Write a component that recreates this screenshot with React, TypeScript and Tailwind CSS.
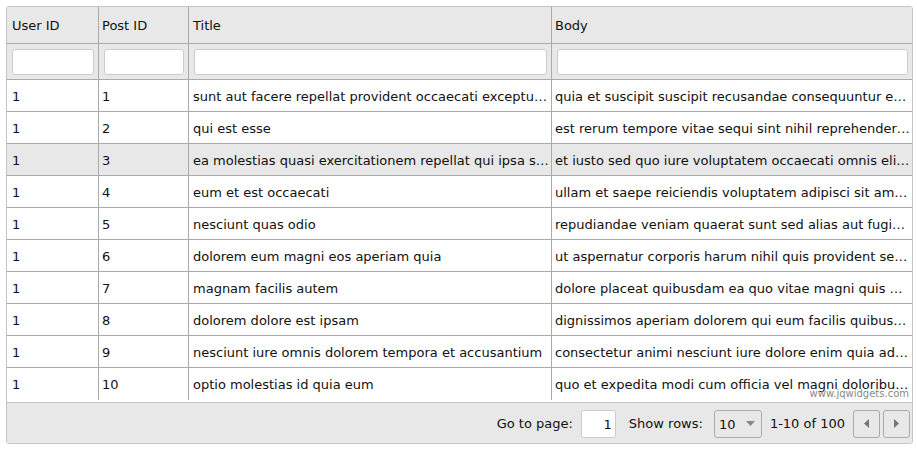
import React from "react";

type Post = {
  userId: number;
  id: number;
  title: string;
  body: string;
};

const posts: Post[] = [
  {
    userId: 1,
    id: 1,
    title: "sunt aut facere repellat provident occaecati excepturi optio reprehenderit",
    body: "quia et suscipit suscipit recusandae consequuntur expedita et cum reprehenderit molestiae ut ut quas totam",
  },
  {
    userId: 1,
    id: 2,
    title: "qui est esse",
    body: "est rerum tempore vitae sequi sint nihil reprehenderit dolor beatae ea dolores neque",
  },
  {
    userId: 1,
    id: 3,
    title: "ea molestias quasi exercitationem repellat qui ipsa sit aut",
    body: "et iusto sed quo iure voluptatem occaecati omnis eligendi aut ad voluptatem doloribus vel accusantium",
  },
  {
    userId: 1,
    id: 4,
    title: "eum et est occaecati",
    body: "ullam et saepe reiciendis voluptatem adipisci sit amet autem assumenda provident rerum culpa",
  },
  {
    userId: 1,
    id: 5,
    title: "nesciunt quas odio",
    body: "repudiandae veniam quaerat sunt sed alias aut fugiat sit autem sed est voluptatem omnis",
  },
  {
    userId: 1,
    id: 6,
    title: "dolorem eum magni eos aperiam quia",
    body: "ut aspernatur corporis harum nihil quis provident sequi mollitia nobis aliquid molestiae",
  },
  {
    userId: 1,
    id: 7,
    title: "magnam facilis autem",
    body: "dolore placeat quibusdam ea quo vitae magni quis enim qui quis quo nemo aut saepe",
  },
  {
    userId: 1,
    id: 8,
    title: "dolorem dolore est ipsam",
    body: "dignissimos aperiam dolorem qui eum facilis quibusdam animi sint suscipit qui sint possimus cum",
  },
  {
    userId: 1,
    id: 9,
    title: "nesciunt iure omnis dolorem tempora et accusantium",
    body: "consectetur animi nesciunt iure dolore enim quia ad veniam autem ut quam aut nobis",
  },
  {
    userId: 1,
    id: 10,
    title: "optio molestias id quia eum",
    body: "quo et expedita modi cum officia vel magni doloribus qui repudiandae vero nisi sit",
  },
];

const cols = "grid grid-cols-[92px_90px_363px_360px]";
const headPad = ["pl-[5px]", "pl-[3px]", "pl-[4px]", "pl-[3px]"];

export default function App() {
  return (
    <div
      className="bg-white pl-[6px] pt-[6px] text-[13px] text-[#111]"
      style={{ fontFamily: '"DejaVu Sans", Verdana, sans-serif' }}
    >
      <div className="relative w-[907px] h-[438px] border border-[#c5c5c5] rounded-[3px] overflow-hidden flex flex-col">
        {/* Header */}
        <div className={`${cols} h-[37px] bg-[#e8e8e8] border-b border-[#aaa]`}>
          {["User ID", "Post ID", "Title", "Body"].map((h, i) => (
            <div
              key={h}
              className={`flex items-center pt-[2px] ${headPad[i]} ${i < 3 ? "border-r border-[#aaa]" : ""}`}
            >
              {h}
            </div>
          ))}
        </div>

        {/* Filter row */}
        <div className={`${cols} h-[36px] bg-[#e8e8e8] border-b border-[#aaa]`}>
          {[0, 1, 2, 3].map((i) => (
            <div
              key={i}
              className={`flex items-center pl-[5px] pr-[4px] ${i < 3 ? "border-r border-[#aaa]" : ""}`}
            >
              <input className="w-full h-[26px] bg-white border border-[#ccc] rounded-[3px] outline-none" />
            </div>
          ))}
        </div>

        {/* Rows */}
        <div className="flex-1">
          {posts.map((p) => (
            <div
              key={p.id}
              className={`${cols} h-[32px] border-b border-[#aaa] ${p.id === 3 ? "bg-[#e8e8e8]" : "bg-white"} ${p.id === 10 ? "border-b-0" : ""}`}
            >
              <div className="flex items-center pt-[2px] pl-[5px] border-r border-[#aaa]">{p.userId}</div>
              <div className="flex items-center pt-[2px] pl-[3px] border-r border-[#aaa]">{p.id}</div>
              <div className="flex items-center pt-[2px] pl-[4px] pr-[2px] border-r border-[#aaa] min-w-0">
                <span className="truncate">{p.title}</span>
              </div>
              <div className="flex items-center pt-[2px] pl-[3px] pr-[2px] min-w-0">
                <span className="truncate">{p.body}</span>
              </div>
            </div>
          ))}
        </div>

        {/* watermark */}
        <div className="absolute right-[3px] bottom-[44px] text-[10px] leading-none text-[#888]">
          www.jqwidgets.com
        </div>

        {/* Pager */}
        <div className="h-[41px] bg-[#e8e8e8] border-t border-[#c5c5c5] flex items-center justify-end pr-[2px] pt-[1px]">
          <span className="mr-[8px]">Go to page:</span>
          <div className="w-[35px] h-[28px] bg-white border border-[#ccc] rounded-[3px] flex items-center justify-end pr-[3px] pt-[2px] mr-[13px]">
            1
          </div>
          <span className="mr-[11px]">Show rows:</span>
          <div className="w-[48px] h-[28px] bg-[#e8e8e8] border border-[#aaa] rounded-[3px] flex items-center justify-between pl-[4px] pr-[6px] mr-[8px]">
            <span className="mt-[3px]">10</span>
            <svg width="9" height="5" viewBox="0 0 9 5">
              <path d="M0 0h9L4.5 5z" fill="#888" />
            </svg>
          </div>
          <span className="mr-[8px]">1-10 of 100</span>
          <div className="w-[27px] h-[28px] border border-[#aaa] rounded-[3px] bg-[#e8e8e8] flex items-center justify-center mr-[3px]">
            <svg width="5" height="9" viewBox="0 0 5 9">
              <path d="M5 0v9L0 4.5z" fill="#777" />
            </svg>
          </div>
          <div className="w-[27px] h-[28px] border border-[#aaa] rounded-[3px] bg-[#e8e8e8] flex items-center justify-center">
            <svg width="5" height="9" viewBox="0 0 5 9">
              <path d="M0 0v9L5 4.5z" fill="#777" />
            </svg>
          </div>
        </div>
      </div>
    </div>
  );
}
